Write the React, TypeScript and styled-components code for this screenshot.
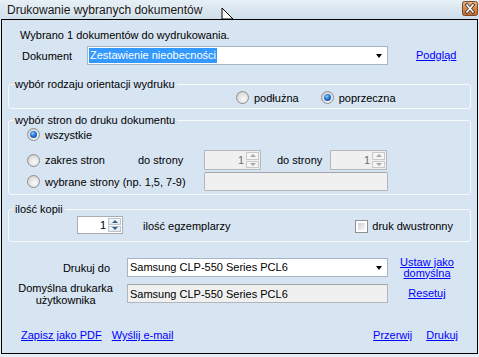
import React from "react";
import styled, { createGlobalStyle, css } from "styled-components";

const Global = createGlobalStyle`
  html, body { margin: 0; padding: 0; }
  body {
    width: 479px; height: 357px; overflow: hidden;
    background: #e4edf4;
    font-family: "Liberation Sans", Arial, sans-serif;
    font-size: 11px; color: #000;
  }
  * { box-sizing: border-box; }
`;

const Window = styled.div`
  width: 479px;
  height: 357px;
  display: flex;
  flex-direction: column;
`;

const TitleBar = styled.div`
  position: relative;
  height: 19px;
  flex: none;
  display: flex;
  align-items: center;
  padding-left: 7px;
  background: linear-gradient(to bottom, #e7f0f6 0%, #dae7f0 45%, #d0dfea 100%);
  font-size: 12px;
  color: #151515;
`;

const TitleText = styled.span`
  flex: 1;
  white-space: nowrap;
  text-shadow: 0 0 4px rgba(255, 255, 255, 0.9);
`;

const CloseBox = styled.div`
  align-self: flex-start;
  margin: 1px 1px 0 0;
  width: 16px;
  height: 15px;
  flex: none;
  display: flex;
`;

const Cursor = styled.svg`
  position: absolute;
  left: 221px;
  top: 7px;
`;

const Body = styled.div`
  flex: none;
  height: 335px;
  margin: 0 1px;
  border: 1px solid #000;
  background: #d7e4f2;
  padding: 9px 6px 11px 6px;
  display: flex;
  flex-direction: column;
`;

const Info = styled.div`
  line-height: 13px;
  margin-left: 12px;
`;

const DocRow = styled.div`
  margin-top: 4px;
  height: 19px;
  display: flex;
  align-items: center;
`;

const FieldLabel = styled.span<{ $w: number; $ml?: number }>`
  width: ${(p) => p.$w}px;
  margin-left: ${(p) => p.$ml ?? 0}px;
  flex: none;
  white-space: nowrap;
`;

const Combo = styled.div<{ $w: number }>`
  width: ${(p) => p.$w}px;
  height: 19px;
  flex: none;
  border: 1px solid #a3b5c9;
  background: #fff;
  display: flex;
  align-items: center;
  padding: 0 5px 0 1px;
`;

const ComboText = styled.span<{ $sel?: boolean }>`
  flex: 1;
  line-height: 15px;
  white-space: nowrap;
  ${(p) =>
    p.$sel
      ? css`
          flex: none;
          background: #3399ff;
          color: #fff;
          padding: 0 1px;
        `
      : css`
          padding-left: 1px;
        `}
`;

const ComboSpacer = styled.span`
  flex: 1;
`;

const Arrow = styled.span`
  width: 0;
  height: 0;
  border-left: 3.5px solid transparent;
  border-right: 3.5px solid transparent;
  border-top: 4px solid #000;
  flex: none;
`;

const Link = styled.a<{ $ml?: number }>`
  color: #0000ff;
  text-decoration: underline;
  cursor: pointer;
  white-space: nowrap;
  margin-left: ${(p) => p.$ml ?? 0}px;
  line-height: 13px;
`;

const Group = styled.fieldset<{ $mt: number; $pb: number }>`
  margin: ${(p) => p.$mt}px 0 0 0;
  padding: 0 0 ${(p) => p.$pb}px 0;
  border: 1px solid #f7fafd;
  border-radius: 3px;
  min-width: 0;
`;

const Legend = styled.legend`
  padding: 0 2px;
  margin-left: 4px;
  line-height: 13px;
`;

const OptionRow = styled.div<{ $pl?: number; $mt?: number; $h?: number }>`
  display: flex;
  align-items: center;
  padding-left: ${(p) => p.$pl ?? 0}px;
  margin-top: ${(p) => p.$mt ?? 0}px;
  height: ${(p) => p.$h ?? 13}px;
`;

const RadioLabel = styled.label<{ $w?: number; $ml?: number }>`
  display: flex;
  align-items: center;
  gap: 5px;
  flex: none;
  white-space: nowrap;
  ${(p) => (p.$w ? `width: ${p.$w}px;` : "")}
  margin-left: ${(p) => p.$ml ?? 0}px;
`;

const RadioDot = styled.span<{ $on?: boolean }>`
  position: relative;
  width: 13px;
  height: 13px;
  flex: none;
  border-radius: 50%;
  border: 1px solid #8e8f8f;
  background: radial-gradient(circle at 60% 65%, #fafafa 0, #e1e1e1 55%, #cfcfcf 80%, #f2f2f2 100%);
  ${(p) =>
    p.$on &&
    css`
      &::after {
        content: "";
        position: absolute;
        left: 2px;
        top: 2px;
        width: 7px;
        height: 7px;
        border-radius: 50%;
        background: radial-gradient(circle at 40% 35%, #8fd0fb 0, #2c79d8 40%, #0c3a8e 100%);
      }
    `}
`;

const Spin = styled.div<{ $w: number; $h: number; $disabled?: boolean; $ml?: number }>`
  width: ${(p) => p.$w}px;
  height: ${(p) => p.$h}px;
  margin-left: ${(p) => p.$ml ?? 0}px;
  flex: none;
  display: flex;
  border: 1px solid ${(p) => (p.$disabled ? "#b4b8bc" : "#abadb3")};
  background: ${(p) => (p.$disabled ? "#f0f0f0" : "#fff")};
  color: ${(p) => (p.$disabled ? "#6d6d6d" : "#000")};
  padding: 1px;
`;

const SpinValue = styled.span`
  flex: 1;
  text-align: right;
  padding-right: 2px;
  align-self: center;
  line-height: 13px;
`;

const SpinButtons = styled.div`
  width: 13px;
  flex: none;
  display: flex;
  flex-direction: column;
  gap: 1px;
`;

const SpinButton = styled.div<{ $down?: boolean; $disabled?: boolean }>`
  flex: 1;
  display: flex;
  align-items: center;
  justify-content: center;
  border: 1px solid ${(p) => (p.$disabled ? "#c9c9c9" : "#b9c4cf")};
  background: ${(p) => (p.$disabled ? "#f4f4f4" : "linear-gradient(#f6f9fc, #e1e8ef)")};
  &::before {
    content: "";
    width: 0;
    height: 0;
    border-left: 3px solid transparent;
    border-right: 3px solid transparent;
    ${(p) =>
      p.$down
        ? `border-top: 3px solid ${p.$disabled ? "#a7a7a7" : "#3a5f8a"};`
        : `border-bottom: 3px solid ${p.$disabled ? "#a7a7a7" : "#3a5f8a"};`}
  }
`;

const TextBox = styled.div<{ $w: number; $h?: number; $radius?: number }>`
  width: ${(p) => p.$w}px;
  height: ${(p) => p.$h ?? 19}px;
  flex: none;
  border: 1px solid #b2b6ba;
  border-top-color: #a2a6aa;
  border-radius: ${(p) => p.$radius ?? 0}px;
  background: #f0f0f0;
  display: flex;
  align-items: center;
  padding-left: 2px;
  white-space: nowrap;
`;

const CopiesRow = styled.div`
  display: flex;
  align-items: center;
  height: 18px;
  padding: 0 17px 0 68px;
`;

const CopiesText = styled.span`
  margin-left: 20px;
  margin-top: 2px;
  white-space: nowrap;
`;

const CheckLabel = styled.label`
  margin-left: auto;
  margin-top: 2px;
  display: flex;
  align-items: center;
  gap: 4px;
  white-space: nowrap;
`;

const CheckBox = styled.span`
  width: 13px;
  height: 13px;
  flex: none;
  border: 1px solid #8e8f8f;
  background: #fff;
  padding: 2px;
  &::before {
    content: "";
    display: block;
    width: 100%;
    height: 100%;
    background: linear-gradient(135deg, #cbcfd5 0%, #e6e8eb 60%, #f3f4f5 100%);
  }
`;

const PrinterGrid = styled.div`
  margin-top: 16px;
  display: grid;
  grid-template-columns: 105px 261px 1fr;
  column-gap: 14px;
  row-gap: 7px;
  grid-template-rows: 19px 19px;
`;

const PrinterLabel = styled.div<{ $pr?: number }>`
  display: flex;
  align-items: center;
  justify-content: flex-end;
  padding-right: ${(p) => p.$pr ?? 0}px;
  white-space: nowrap;
`;

const CenteredLines = styled.span`
  text-align: center;
  line-height: 12px;
`;

const SideLink = styled.div`
  display: flex;
  align-items: center;
  justify-content: center;
  padding-right: 5px;
  margin-left: -14px;
  text-align: center;
  line-height: 11px;
  white-space: nowrap;
`;

const SideAnchor = styled.a`
  color: #0000ff;
  text-decoration: underline;
  cursor: pointer;
`;

const Footer = styled.div`
  margin-top: auto;
  display: flex;
  align-items: center;
  padding: 0 13px;
  height: 13px;
`;

const FooterSpacer = styled.span`
  flex: 1;
`;

function Radio({ on, children, w, ml }: { on?: boolean; children: React.ReactNode; w?: number; ml?: number }) {
  return (
    <RadioLabel $w={w} $ml={ml}>
      <RadioDot $on={on} />
      <span>{children}</span>
    </RadioLabel>
  );
}

function SpinBox({ w, h, disabled, ml }: { w: number; h: number; disabled?: boolean; ml?: number }) {
  return (
    <Spin $w={w} $h={h} $disabled={disabled} $ml={ml}>
      <SpinValue>1</SpinValue>
      <SpinButtons>
        <SpinButton $disabled={disabled} />
        <SpinButton $down $disabled={disabled} />
      </SpinButtons>
    </Spin>
  );
}

export default function App() {
  return (
    <>
      <Global />
      <Window>
        <TitleBar>
          <TitleText>Drukowanie wybranych dokumentów</TitleText>
          <CloseBox>
            <svg width="16" height="15" viewBox="0 0 16 15">
              <defs>
                <linearGradient id="cb" x1="0" y1="0" x2="0" y2="1">
                  <stop offset="0" stopColor="#e9b684" />
                  <stop offset="0.5" stopColor="#d48a4a" />
                  <stop offset="1" stopColor="#c06a2c" />
                </linearGradient>
              </defs>
              <rect x="0.5" y="0.5" width="15" height="14" rx="2" fill="url(#cb)" stroke="#7a4a28" />
              <path d="M5 4 L11 11 M11 4 L5 11" stroke="#3d2a1e" strokeWidth="3.2" strokeLinecap="square" />
              <path d="M5 4 L11 11 M11 4 L5 11" stroke="#ffffff" strokeWidth="1.6" strokeLinecap="square" />
            </svg>
          </CloseBox>
          <Cursor width="14" height="13" viewBox="0 0 14 13">
            <polygon points="1,1 1,12 12,12" fill="#fff" stroke="#000" strokeWidth="1" />
          </Cursor>
        </TitleBar>
        <Body>
          <Info>Wybrano 1 dokumentów do wydrukowania.</Info>
          <DocRow>
            <FieldLabel $w={65} $ml={14}>Dokument</FieldLabel>
            <Combo $w={301}>
              <ComboText $sel>Zestawienie nieobecności</ComboText>
              <ComboSpacer />
              <Arrow />
            </Combo>
            <Link $ml={28}>Podgląd</Link>
          </DocRow>

          <Group $mt={13} $pb={4}>
            <Legend>wybór rodzaju orientacji wydruku</Legend>
            <OptionRow $pl={227}>
              <Radio>podłużna</Radio>
              <Radio ml={22} on>
                poprzeczna
              </Radio>
            </OptionRow>
          </Group>

          <Group $mt={5} $pb={3}>
            <Legend>wybór stron do druku dokumentu</Legend>
            <OptionRow $pl={18} $mt={1}>
              <Radio on>wszystkie</Radio>
            </OptionRow>
            <OptionRow $pl={18} $mt={9} $h={20}>
              <Radio w={111}>zakres stron</Radio>
              <FieldLabel $w={66}>do strony</FieldLabel>
              <SpinBox w={57} h={20} disabled />
              <FieldLabel $w={53} $ml={16}>do strony</FieldLabel>
              <SpinBox w={57} h={20} disabled />
            </OptionRow>
            <OptionRow $pl={18} $mt={2} $h={19}>
              <Radio w={177}>wybrane strony (np. 1,5, 7-9)</Radio>
              <TextBox $w={184} $radius={2} />
            </OptionRow>
          </Group>

          <Group $mt={8} $pb={7}>
            <Legend>ilość kopii</Legend>
            <CopiesRow>
              <SpinBox w={46} h={18} />
              <CopiesText>ilość egzemplarzy</CopiesText>
              <CheckLabel>
                <CheckBox />
                <span>druk dwustronny</span>
              </CheckLabel>
            </CopiesRow>
          </Group>

          <PrinterGrid>
            <PrinterLabel $pr={3}>Drukuj do</PrinterLabel>
            <Combo $w={261}>
              <ComboText>Samsung CLP-550 Series PCL6</ComboText>
              <Arrow />
            </Combo>
            <SideLink>
              <SideAnchor>
                Ustaw jako
                <br />
                domyślna
              </SideAnchor>
            </SideLink>
            <PrinterLabel>
              <CenteredLines>
                Domyślna drukarka
                <br />
                użytkownika
              </CenteredLines>
            </PrinterLabel>
            <TextBox $w={261}>Samsung CLP-550 Series PCL6</TextBox>
            <SideLink>
              <SideAnchor>Resetuj</SideAnchor>
            </SideLink>
          </PrinterGrid>

          <Footer>
            <Link>Zapisz jako PDF</Link>
            <Link $ml={10}>Wyślij e-mail</Link>
            <FooterSpacer />
            <Link>Przerwij</Link>
            <Link $ml={14}>Drukuj</Link>
          </Footer>
        </Body>
      </Window>
    </>
  );
}
